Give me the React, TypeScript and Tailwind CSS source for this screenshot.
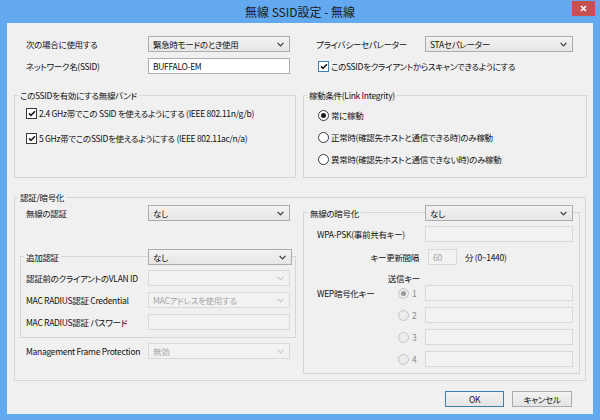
import type React from "react"

const Chevron = ({ disabled }: { disabled?: boolean }) => (
  <svg width="7" height="5" viewBox="0 0 7 5" className="shrink-0">
    <path d="M0.6 0.9 L3.5 3.8 L6.4 0.9" fill="none" stroke={disabled ? "#c8c8c8" : "#3a3a3a"} strokeWidth="1.2" />
  </svg>
)

interface BoxProps {
  value?: string
  disabled?: boolean
  w?: string
}

const Select: React.FC<BoxProps> = ({ value = "", disabled, w = "w-[142px]" }) => (
  <div
    className={`${w} h-[16px] shrink-0 flex items-center justify-between border pl-[4px] pr-[5px] ${
      disabled
        ? "border-[#d9d9d9] bg-[#f2f2f2] text-[#a6a6a6]"
        : "border-[#acacac] bg-linear-to-b from-[#f2f2f2] to-[#e6e6e6] text-[#111]"
    }`}
  >
    <span>{value}</span>
    <Chevron disabled={disabled} />
  </div>
)

const TextBox: React.FC<BoxProps> = ({ value = "", disabled, w = "w-[142px]" }) => (
  <div
    className={`${w} h-[16px] shrink-0 flex items-center border pl-[4px] ${
      disabled ? "border-[#d9d9d9] bg-[#f2f2f2] text-[#a6a6a6]" : "border-[#abadb3] bg-white text-[#111]"
    }`}
  >
    {value}
  </div>
)

const Check = ({ focus }: { focus?: boolean }) => (
  <span
    className={`w-[11px] h-[11px] shrink-0 border bg-white flex items-center justify-center ${
      focus ? "border-[#3c7fb1]" : "border-[#3a3a3a]"
    }`}
  >
    <svg width="8" height="7" viewBox="0 0 8 7">
      <path d="M1 3.4 L3 5.4 L7 1.2" fill="none" stroke="#1e1e1e" strokeWidth="1.6" />
    </svg>
  </span>
)

const Radio = ({ checked, disabled }: { checked?: boolean; disabled?: boolean }) => (
  <span
    className={`w-[11px] h-[11px] shrink-0 rounded-full border flex items-center justify-center ${
      disabled ? "border-[#c4c4c4] bg-[#ececec]" : "border-[#3a3a3a] bg-white"
    }`}
  >
    {checked && <span className={`w-[5px] h-[5px] rounded-full ${disabled ? "bg-[#9a9a9a]" : "bg-[#1e1e1e]"}`} />}
  </span>
)

export default function App() {
  return (
    <div className="w-[600px] h-[420px] bg-[#62a9ef] flex flex-col whitespace-nowrap font-['Noto_Sans_CJK_JP','Noto_Sans',sans-serif] [font-feature-settings:'palt'] text-[8.5px] tracking-[-0.3px] leading-[12px] text-[#111]">
      {/* title bar */}
      <div className="relative h-[23px] shrink-0 flex items-center justify-center">
        <span className="text-[12px] leading-[16px] tracking-normal text-[#1a1a1a]">無線 SSID設定 - 無線</span>
        <div className="absolute right-[5px] top-[1px] w-[23px] h-[15px] bg-[#c75050] flex items-center justify-center">
          <svg width="7" height="7" viewBox="0 0 7 7">
            <path d="M1 1 L6 6 M6 1 L1 6" stroke="#fff" strokeWidth="1.6" />
          </svg>
        </div>
      </div>

      <div className="mx-[7px] h-[391px] bg-[#f0f0f0] px-[7px] pt-[13px]">
        {/* top rows */}
        <div className="grid grid-cols-[282px_284px] gap-x-[7px]">
          <div className="flex flex-col gap-[6px]">
            <div className="h-[16px] flex items-center justify-between pl-[12px] pr-[6px]">
              <span>次の場合に使用する</span>
              <Select value="緊急時モードのとき使用" />
            </div>
            <div className="h-[16px] flex items-center justify-between pl-[12px] pr-[6px]">
              <span>ネットワーク名(SSID)</span>
              <TextBox value="BUFFALO-EM" />
            </div>
          </div>
          <div className="flex flex-col gap-[6px]">
            <div className="h-[16px] flex items-center justify-between pl-[13px] pr-[14px]">
              <span>プライバシーセパレーター</span>
              <Select value="STAセパレーター" w="w-[148px]" />
            </div>
            <div className="h-[16px] flex items-center gap-[2px] pl-[15px]">
              <Check focus />
              <span>このSSIDをクライアントからスキャンできるようにする</span>
            </div>
          </div>
        </div>

        {/* band / link integrity */}
        <div className="grid grid-cols-[282px_284px] gap-x-[7px] mt-[15px]">
          <fieldset className="h-[89px] border border-[#d5d5d5] p-0 m-0">
            <legend className="ml-[3px] px-[2px]">このSSIDを有効にする無線バンド</legend>
            <div className="flex flex-col gap-[11px] pt-[5px] pl-[11px]">
              <div className="h-[14px] flex items-center gap-[2px]">
                <Check />
                <span>2.4 GHz帯でこの SSID を使えるようにする (IEEE 802.11n/g/b)</span>
              </div>
              <div className="h-[14px] flex items-center gap-[2px]">
                <Check />
                <span>5 GHz帯でこのSSIDを使えるようにする (IEEE 802.11ac/n/a)</span>
              </div>
            </div>
          </fieldset>
          <fieldset className="h-[89px] border border-[#d5d5d5] p-0 m-0">
            <legend className="ml-[3px] px-[2px]">稼動条件(Link Integrity)</legend>
            <div className="flex flex-col gap-[8px] pt-[7px] pl-[14px]">
              <div className="h-[14px] flex items-center gap-[2px]">
                <Radio checked />
                <span>常に稼動</span>
              </div>
              <div className="h-[14px] flex items-center gap-[2px]">
                <Radio />
                <span>正常時(確認先ホストと通信できる時)のみ稼動</span>
              </div>
              <div className="h-[14px] flex items-center gap-[2px]">
                <Radio />
                <span>異常時(確認先ホストと通信できない時)のみ稼動</span>
              </div>
            </div>
          </fieldset>
        </div>

        {/* auth / encryption */}
        <fieldset className="mt-[13px] h-[190px] border border-[#d5d5d5] p-0 m-0">
          <legend className="ml-[3px] px-[2px]">認証/暗号化</legend>
          <div className="grid grid-cols-[276px_277px] gap-x-[7px] px-[5px] pt-[2px]">
            {/* left */}
            <div className="flex flex-col">
              <div className="h-[16px] flex items-center justify-between pl-[6px] pr-[6px]">
                <span>無線の認証</span>
                <Select value="なし" />
              </div>
              <div className="relative z-10 mt-[28px] h-[16px] flex items-center pl-[4px]">
                <span className="bg-[#f0f0f0] px-[2px]">追加認証</span>
                <div className="ml-auto mr-[4px]">
                  <Select value="なし" w="w-[144px]" />
                </div>
              </div>
              <div className="-mt-[9px] border border-[#d5d5d5] pt-[13px] pb-[7px] pl-[5px] pr-[5px] flex flex-col gap-[6px]">
                <div className="h-[16px] flex items-center justify-between">
                  <span>認証前のクライアントのVLAN ID</span>
                  <Select disabled />
                </div>
                <div className="h-[16px] flex items-center justify-between">
                  <span>MAC RADIUS認証 Credential</span>
                  <Select value="MACアドレスを使用する" disabled />
                </div>
                <div className="h-[16px] flex items-center justify-between">
                  <span>MAC RADIUS認証 パスワード</span>
                  <TextBox disabled />
                </div>
              </div>
              <div className="mt-[5px] h-[16px] flex items-center justify-between pl-[6px] pr-[6px]">
                <span>Management Frame Protection</span>
                <Select value="無効" disabled />
              </div>
            </div>

            {/* right */}
            <div className="flex flex-col">
              <div className="relative z-10 h-[16px] flex items-center pl-[5px]">
                <span className="bg-[#f0f0f0] px-[2px]">無線の暗号化</span>
                <div className="ml-auto mr-[7px]">
                  <Select value="なし" w="w-[148px]" />
                </div>
              </div>
              <div className="-mt-[9px] border border-[#d5d5d5] pt-[13px] pb-[6px] pl-[13px] pr-[6px] flex flex-col">
                <div className="h-[16px] flex items-center justify-between">
                  <span>WPA-PSK(事前共有キー)</span>
                  <TextBox disabled w="w-[148px]" />
                </div>
                <div className="mt-[7px] h-[16px] flex items-center">
                  <span className="w-[102px] text-right">キー更新間隔</span>
                  <div className="ml-[9px]">
                    <TextBox value="60" disabled w="w-[29px]" />
                  </div>
                  <span className="ml-[8px]">分 (0~1440)</span>
                </div>
                <div className="mt-[7px] h-[12px] w-[103px] text-right">送信キー</div>
                <div className="mt-[1px] flex flex-col gap-[6px]">
                  {["1", "2", "3", "4"].map((n) => (
                    <div key={n} className="h-[16px] flex items-center">
                      <span className="w-[81px]">{n === "1" ? "WEP暗号化キー" : ""}</span>
                      <Radio checked={n === "1"} disabled />
                      <span className="ml-[3px] text-[#8a8a8a]">{n}</span>
                      <div className="ml-auto">
                        <TextBox disabled w="w-[148px]" />
                      </div>
                    </div>
                  ))}
                </div>
              </div>
            </div>
          </div>
        </fieldset>

        {/* buttons */}
        <div className="mt-[10px] flex justify-end gap-[8px] pr-[14px]">
          <button className="w-[59px] h-[16px] border border-[#3c7fb1] bg-linear-to-b from-[#f2f2f2] to-[#e4e4e4] leading-[14px]">
            OK
          </button>
          <button className="w-[60px] h-[16px] border border-[#acacac] bg-linear-to-b from-[#f2f2f2] to-[#e4e4e4] leading-[14px]">
            キャンセル
          </button>
        </div>
      </div>
    </div>
  )
}
